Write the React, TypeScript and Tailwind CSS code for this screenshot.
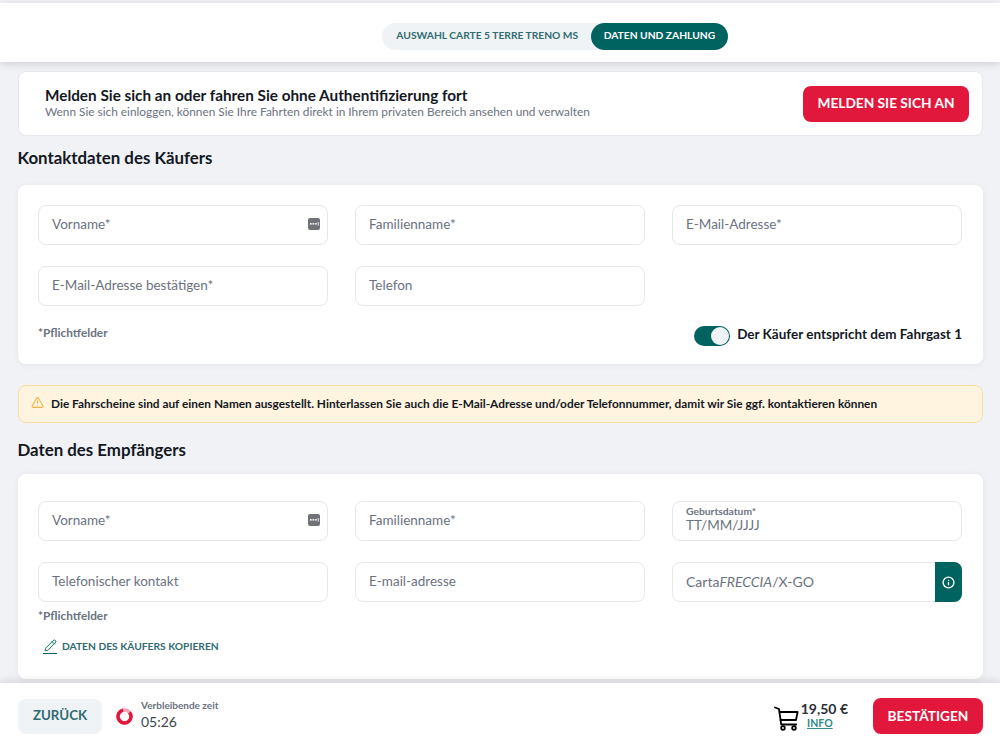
import { Info, TriangleAlert, Pencil } from 'lucide-react';

function KeyIcon() {
    return (
        <svg className="absolute right-[7px] top-[12px] w-[12px] h-[12px]" viewBox="0 0 12 12">
            <rect width="12" height="12" rx="2" fill="#6f7276" />
            <rect x="2" y="5" width="1.6" height="1.6" fill="#fff" />
            <rect x="4.6" y="5" width="1.6" height="1.6" fill="#fff" />
            <rect x="7.2" y="5" width="1.6" height="1.6" fill="#fff" />
            <rect x="9.8" y="4" width="0.8" height="3.6" fill="#fff" />
        </svg>
    );
}

function CartIcon() {
    return (
        <svg className="w-[25px] h-[25px] mt-[5px]" viewBox="0 0 25 25" fill="none" stroke="#000" strokeWidth="1.8" strokeLinecap="round" strokeLinejoin="round">
            <path d="M1 1.5l4 1.5 2.2 15.5h15" />
            <path d="M5.6 6h18l-1.6 8H6.6" />
            <circle cx="9" cy="22" r="1.8" />
            <circle cx="20" cy="22" r="1.8" />
        </svg>
    );
}

function Field({ label, keyIcon }: { label: string; keyIcon?: boolean }) {
    return (
        <div className="relative h-[40px] bg-white border border-[#e4e7ec] rounded-lg pl-[13px] pb-[1px] flex items-center text-[13.5px] text-[#6b7280]">
            {label}
            {keyIcon && <KeyIcon />}
        </div>
    );
}

export default function App() {
    return (
        <div className="h-[745px] w-[1000px] overflow-hidden flex flex-col bg-[#f0f2f6] text-[#14181f]" style={{ fontFamily: 'Lato, sans-serif' }}>
            {/* Header */}
            <div className="mt-[3px] h-[59px] shrink-0 bg-white shadow-[0_2px_8px_rgba(0,0,0,0.14)] flex justify-center items-center pt-[7px] relative">
                <div className="ml-[110px] flex items-center h-[27px] rounded-full bg-[#f0f3f6] text-[10.25px] font-bold">
                    <div className="pl-[14px] pr-[13px] text-[#2f6b70]">AUSWAHL CARTE 5 TERRE TRENO MS</div>
                    <div className="h-full px-[12.5px] rounded-full bg-[#00635f] text-white flex items-center">DATEN UND ZAHLUNG</div>
                </div>
            </div>

            {/* Content */}
            <div className="flex-1 overflow-hidden px-[18px] pt-[9px] pr-[17px]">
                <div className="h-[65px] bg-white border border-[#e6e9ee] rounded-lg flex items-center justify-between pl-[26px] pr-[13px]">
                    <div className="mt-[-3px]">
                        <div className="text-[15.3px] font-bold leading-[18px]">Melden Sie sich an oder fahren Sie ohne Authentifizierung fort</div>
                        <div className="text-[11.85px] leading-[15px] text-[#6b7280]">Wenn Sie sich einloggen, können Sie Ihre Fahrten direkt in Ihrem privaten Bereich ansehen und verwalten</div>
                    </div>
                    <button className="w-[166px] h-[36px] rounded-lg bg-[#e2173c] text-white font-bold text-[13.7px]">MELDEN SIE SICH AN</button>
                </div>

                <h2 className="mt-[11px] ml-[-0.5px] text-[16.85px] font-bold leading-[22px]">Kontaktdaten des Käufers</h2>

                <div className="mt-[16px] h-[179px] bg-white rounded-lg shadow-[0_1px_6px_rgba(0,0,0,0.06)] pt-[20px] px-[20px] pr-[21px]">
                    <div className="grid grid-cols-[290px_290px_290px] gap-x-[27px] gap-y-[21px]">
                        <Field label="Vorname*" keyIcon />
                        <Field label="Familienname*" />
                        <Field label="E-Mail-Adresse*" />
                        <Field label="E-Mail-Adresse bestätigen*" />
                        <Field label="Telefon" />
                    </div>
                    <div className="mt-[20px] flex items-center justify-between">
                        <span className="text-[11.8px] font-bold text-[#6b7280] mt-[-6px]">*Pflichtfelder</span>
                        <div className="flex items-center gap-[7px]">
                            <div className="w-[36px] h-[20px] rounded-full bg-[#00635f] relative">
                                <div className="absolute right-[1px] top-[1px] w-[18px] h-[18px] rounded-full bg-[#f0f3f6]" />
                            </div>
                            <span className="text-[13.5px] font-bold mt-[-3px]">Der Käufer entspricht dem Fahrgast 1</span>
                        </div>
                    </div>
                </div>

                <div className="mt-[21px] h-[38px] bg-[#fff4df] border border-[#fbdc9f] rounded-lg flex items-center pl-[12px] gap-[7px] text-[11.85px] font-bold">
                    <TriangleAlert className="w-[13px] h-[13px] text-[#f4b245] mt-[-3px]" strokeWidth={2} />
                    <span>Die Fahrscheine sind auf einen Namen ausgestellt. Hinterlassen Sie auch die E-Mail-Adresse und/oder Telefonnummer, damit wir Sie ggf. kontaktieren können</span>
                </div>

                <h2 className="mt-[16px] ml-[-0.5px] text-[16.85px] font-bold leading-[22px]">Daten des Empfängers</h2>

                <div className="mt-[13px] h-[205px] bg-white rounded-lg shadow-[0_1px_6px_rgba(0,0,0,0.06)] pt-[27px] px-[20px] pr-[21px]">
                    <div className="grid grid-cols-[290px_290px_290px] gap-x-[27px] gap-y-[21px]">
                        <Field label="Vorname*" keyIcon />
                        <Field label="Familienname*" />
                        <div className="h-[40px] bg-white border border-[#e4e7ec] rounded-lg pl-[13px] pt-[3px]">
                            <div className="text-[10.3px] font-bold leading-[12px] text-[#6b7280]">Geburtsdatum*</div>
                            <div className="text-[13.5px] leading-[16px] text-[#6b7280]">TT/MM/JJJJ</div>
                        </div>
                        <Field label="Telefonischer kontakt" />
                        <Field label="E-mail-adresse" />
                        <div className="h-[40px] bg-white border border-[#e4e7ec] rounded-lg pl-[13px] flex items-center justify-between text-[14px] text-[#6b7280]">
                            <span className="mt-[-1px]">Carta<i>FRECCIA</i>/X-GO</span>
                            <div className="w-[27px] h-[40px] mr-[-1px] rounded-r-lg bg-[#00635f] flex items-center justify-center">
                                <Info className="w-[13px] h-[13px] text-white" strokeWidth={2.5} />
                            </div>
                        </div>
                    </div>
                    <div className="mt-[6px] text-[11.8px] font-bold leading-[15px] text-[#6b7280]">*Pflichtfelder</div>
                    <div className="mt-[16px] ml-[5px] flex items-center gap-[4px] text-[10.25px] font-bold text-[#2f6b70]">
                        <span className="relative w-[15px] h-[15px]">
                            <Pencil className="w-[13px] h-[13px] text-[#00635f] ml-[1px]" strokeWidth={1.75} />
                            <span className="absolute left-0 bottom-0 w-[14px] h-[1.5px] bg-[#00635f]" />
                        </span>
                        DATEN DES KÄUFERS KOPIEREN
                    </div>
                </div>
            </div>

            {/* Footer */}
            <div className="relative h-[62px] shrink-0 bg-white shadow-[0_-2px_8px_rgba(0,0,0,0.12)] flex items-center justify-between pl-[18px] pr-[17px] pt-[4px]">
                <div className="flex items-center">
                    <button className="w-[84px] h-[35px] rounded-lg bg-[#f0f3f6] text-[#2f6b70] font-bold text-[13.3px]">ZURÜCK</button>
                    <svg className="ml-[14px] w-[17px] h-[17px]" viewBox="0 0 17 17">
                        <circle cx="8.5" cy="8.5" r="6.5" fill="none" stroke="#f2a3b2" strokeWidth="3.5" />
                        <circle cx="8.5" cy="8.5" r="6.5" fill="none" stroke="#e2173c" strokeWidth="3.5" strokeDasharray="33 8" transform="rotate(-40 8.5 8.5)" />
                    </svg>
                    <div className="ml-[8px] mt-[-3px]">
                        <div className="text-[10px] leading-[13px] text-[#6b7280] font-bold">Verbleibende zeit</div>
                        <div className="text-[14px] leading-[17px] text-[#3f444b] mt-[1px]">05:26</div>
                    </div>
                </div>
                <div className="flex items-center">
                    <CartIcon />
                    <div className="ml-[3px] flex flex-col items-center mt-[-2px]">
                        <span className="text-[14px] leading-[16px] font-bold text-[#2b2f36] ml-[-1px]">19,50 €</span>
                        <span className="text-[10.5px] leading-[13px] font-bold text-[#2f8a88] underline mr-[10px]">INFO</span>
                    </div>
                    <button className="ml-[25px] w-[110px] h-[36px] rounded-lg bg-[#e2173c] text-white font-bold text-[13.7px]">BESTÄTIGEN</button>
                </div>
            </div>
        </div>
    );
}
